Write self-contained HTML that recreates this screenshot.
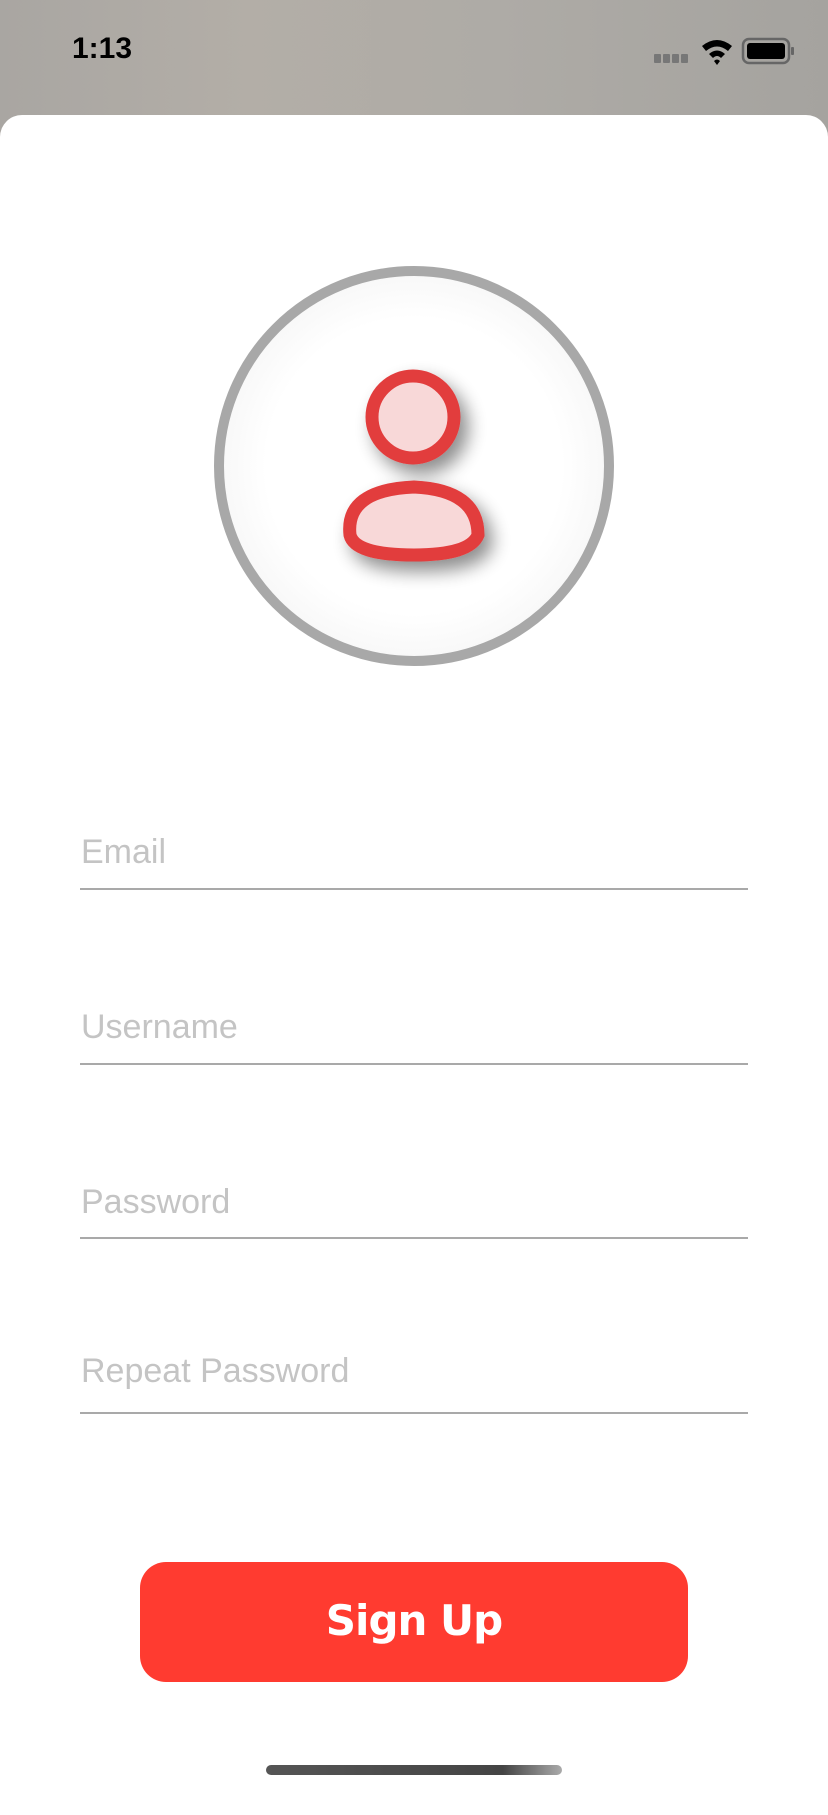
<!DOCTYPE html>
<html><head><meta charset="utf-8"><style>
html,body{margin:0;padding:0}
body{width:828px;height:1792px;position:relative;overflow:hidden;background:linear-gradient(90deg,#a9a6a2,#b3aea7 30%,#aeaba6 60%,#a5a39f);font-family:"Liberation Sans",sans-serif}
.time{position:absolute;left:72px;top:32px;font-size:30px;font-weight:bold;color:#000}
.sheet{position:absolute;left:0;top:115px;width:828px;height:1700px;background:#fff;border-radius:22px 22px 0 0}
.avatar{position:absolute;left:214px;top:266px;width:380px;height:380px;border:10px solid #a8a8a8;border-radius:50%;background:radial-gradient(circle,#fff 55%,#ececec 100%)}
.field{position:absolute;left:80px;width:668px;border-bottom:2px solid #a9a9a9;height:0}
.lbl{position:absolute;left:81px;font-size:34px;color:#c4c4c4}
.btn{position:absolute;left:140px;top:1562px;width:548px;height:120px;background:#ff3b30;border-radius:26px;color:#fff;font-size:42px;font-weight:bold;font-family:"DejaVu Sans",sans-serif;letter-spacing:-1px;text-align:center;line-height:118px}
.home{position:absolute;left:266px;top:1765px;width:296px;height:10px;border-radius:5px;background:linear-gradient(90deg,#555,#444 80%,#aaa)}
</style></head><body>
<div class="time">1:13</div>
<svg style="position:absolute;left:650px;top:34px" width="170" height="34" viewBox="0 0 170 34">
<g fill="#777"><rect x="4" y="20" width="7" height="9" rx="1"/><rect x="13" y="20" width="7" height="9" rx="1"/><rect x="22" y="20" width="7" height="9" rx="1"/><rect x="31" y="20" width="7" height="9" rx="1"/></g>
<path d="M52 12 Q67 0 82 12 L78 17 Q67 8 56 17Z M59 20 Q67 13 75 20 L71 24 Q67 20 63 24Z M64 27 L67 31 L70 27 Q67 24 64 27Z" fill="#000"/>
<rect x="93" y="5" width="46" height="24" rx="6" fill="none" stroke="#666" stroke-width="2.5"/>
<rect x="97" y="9" width="38" height="16" rx="3" fill="#000"/>
<rect x="141" y="13" width="3" height="8" rx="1" fill="#666"/>
</svg>
<div class="sheet"></div>
<div class="avatar"></div>
<svg style="position:absolute;left:300px;top:350px" width="240" height="240" viewBox="300 350 240 240">
<defs><filter id="s" x="-50%" y="-50%" width="200%" height="200%"><feGaussianBlur in="SourceAlpha" stdDeviation="9"/><feOffset dx="8" dy="10"/><feComponentTransfer><feFuncA type="linear" slope="0.45"/></feComponentTransfer><feMerge><feMergeNode/><feMergeNode in="SourceGraphic"/></feMerge></filter></defs>
<g filter="url(#s)" fill="#f8d8d8" stroke="#e23c3d" stroke-width="13">
<circle cx="413" cy="417" r="41"/>
<path d="M350 535 Q345 490 414 487 Q478 490 478 535 Q470 555 414 555 Q355 555 350 535Z"/>
</g></svg>
<div class="lbl" style="top:833px">Email</div><div class="field" style="top:888px"></div>
<div class="lbl" style="top:1008px">Username</div><div class="field" style="top:1063px"></div>
<div class="lbl" style="top:1183px">Password</div><div class="field" style="top:1237px"></div>
<div class="lbl" style="top:1352px">Repeat Password</div><div class="field" style="top:1412px"></div>
<div class="btn">Sign Up</div>
<div class="home"></div>
</body></html>
